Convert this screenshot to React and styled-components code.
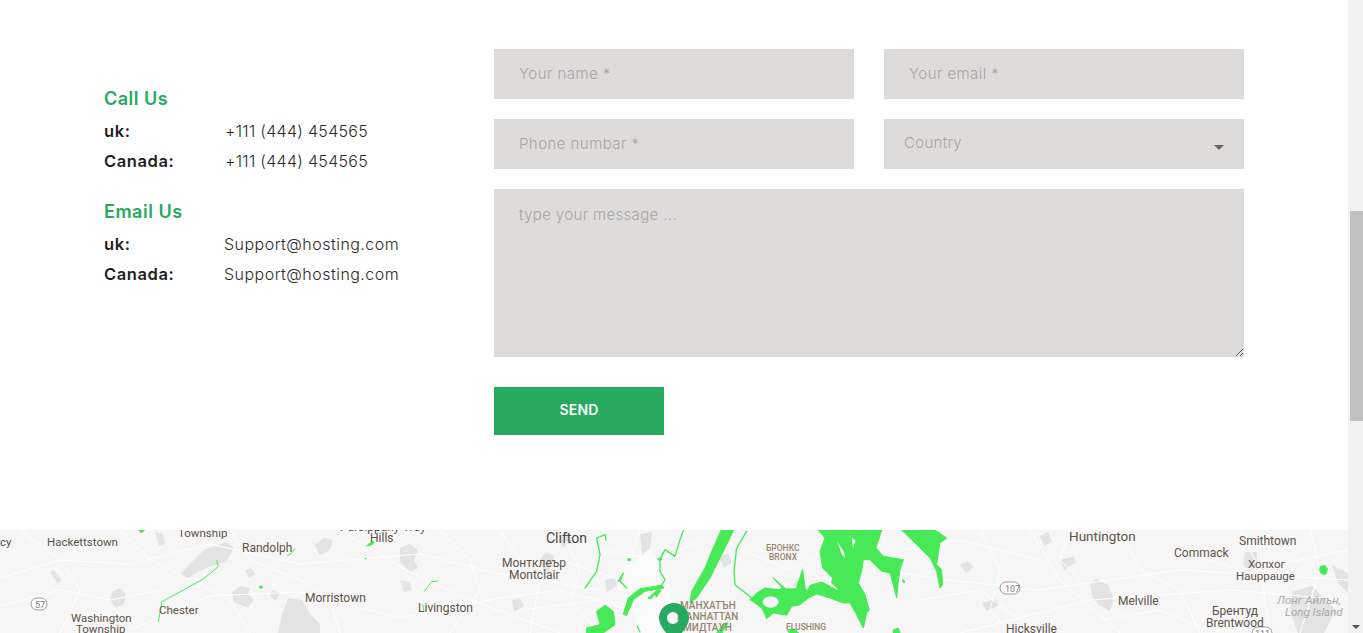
import React from 'react';
import styled, { createGlobalStyle } from 'styled-components';

const GlobalStyle = createGlobalStyle`
    html, body {
        margin: 0;
        padding: 0;
        height: 100%;
        overflow: hidden;
        background: #fff;
    }
    body {
        font-family: "Inter", "Liberation Sans", sans-serif;
    }
`

const Page = styled.div`
    width: 1348px;
`
const ContactSection = styled.section`
    display: flex;
    height: 530px;
    box-sizing: border-box;
    padding: 49px 104px 0;
`
const InfoColumn = styled.div`
    width: 390px;
    padding-top: 38px;
    box-sizing: border-box;
`
const InfoGroup = styled.div`
    margin-bottom: 24px;
`
const InfoTitle = styled.h4`
    margin: 0 0 5px;
    height: 24px;
    line-height: 24px;
    font-size: 18px;
    font-weight: 600;
    letter-spacing: 0.5px;
    color: #27a95f;
`
const InfoRow = styled.div`
    display: flex;
    height: 30px;
    line-height: 30px;
    font-size: 16px;
`
const InfoLabel = styled.span`
    width: ${props => props.$width}px;
    font-size: 16.5px;
    font-weight: 600;
    letter-spacing: 0.6px;
    color: #1f1f1f;
`
const InfoValue = styled.span`
    font-weight: 300;
    color: #2b2b2b;
    letter-spacing: ${props => props.$spacing}px;
`
const ContactForm = styled.form`
    display: grid;
    grid-template-columns: 360px 360px;
    grid-auto-rows: min-content;
    column-gap: 30px;
    row-gap: 20px;
    width: 750px;
`
const Input = styled.input`
    height: 50px;
    box-sizing: border-box;
    border: 0;
    border-radius: 0;
    outline: 0;
    padding: 0 25px 2px;
    background: #dedcdb;
    font-family: inherit;
    font-size: 15px;
    font-weight: 300;
    letter-spacing: 0.45px;
    color: #333;
    &::placeholder {
        color: #a6a4a3;
        opacity: 1;
    }
`
const SelectBox = styled.div`
    position: relative;
    height: 50px;
    box-sizing: border-box;
    padding: 0 20px;
    line-height: 48px;
    background: #dedcdb;
    font-size: 15px;
    font-weight: 300;
    letter-spacing: 0.3px;
    color: #a6a4a3;
`
const SelectCaret = styled.span`
    position: absolute;
    right: 20px;
    top: 26px;
    border-top: 5px solid #666;
    border-left: 5px solid transparent;
    border-right: 5px solid transparent;
`
const MessageArea = styled.textarea`
    grid-column: 1 / 3;
    display: block;
    width: 750px;
    height: 168px;
    box-sizing: border-box;
    border: 0;
    border-radius: 0;
    outline: 0;
    padding: 16px 25px;
    background: #dedcdb;
    font-family: inherit;
    font-size: 15px;
    font-weight: 300;
    letter-spacing: 0.35px;
    &::placeholder {
        color: #a6a4a3;
        opacity: 1;
    }
`
const SendButton = styled.button`
    grid-column: 1 / 3;
    width: 170px;
    height: 48px;
    margin-top: 10px;
    padding: 0 0 3px;
    border: 0;
    border-radius: 0;
    background: #27a95f;
    color: #fff;
    font-family: inherit;
    font-size: 14px;
    font-weight: 600;
    letter-spacing: 0.2px;
`
const MapFrame = styled.div`
    height: 103px;
    overflow: hidden;
    background: #f6f6f6;
`
const MapSvg = styled.svg`
    display: block;
    font-family: "Roboto", "Liberation Sans", sans-serif;
`
const ScrollTrack = styled.div`
    position: fixed;
    top: 0;
    right: 0;
    bottom: 0;
    width: 15px;
    background: #f1f1f1;
`
const ScrollThumb = styled.div`
    position: absolute;
    top: 211px;
    left: 2px;
    right: 0;
    height: 210px;
    background: #c1c1c1;
`
const ScrollArrow = styled.span`
    position: absolute;
    bottom: 4px;
    left: 4px;
    border-top: 4px solid #505050;
    border-left: 4px solid transparent;
    border-right: 4px solid transparent;
`

const phones = [['uk:', '+111 (444) 454565'], ['Canada:', '+111 (444) 454565']];
const emails = [['uk:', 'Support@hosting.com'], ['Canada:', 'Support@hosting.com']];

// [x, baseline y, text, size, colour, weight]
const placeColour = '#5d5348';
const areaColour = '#97866f';
const mapLabels = [
    [340, 1, 'Parsippany-Troy', 12, placeColour],
    [47, 16, 'Hackettstown', 11.5, placeColour],
    [178, 7, 'Township', 11.5, placeColour],
    [242, 22, 'Randolph', 12, placeColour],
    [370, 12, 'Hills', 12, placeColour],
    [305, 72, 'Morristown', 12, placeColour],
    [418, 82, 'Livingston', 12, placeColour],
    [159, 84, 'Chester', 11.5, placeColour],
    [71, 92, 'Washington', 11.5, placeColour],
    [76, 103, 'Township', 11.5, placeColour],
    [546, 13, 'Clifton', 14, '#444'],
    [502, 37, 'Монтклеър', 12, placeColour],
    [509, 49, 'Montclair', 12, placeColour],
    [766, 21, 'БРОНКС', 8.5, areaColour, 500],
    [769, 30, 'BRONX', 8.5, areaColour, 500],
    [680, 79, 'МАНХАТЪН', 10, areaColour, 500],
    [677, 90, 'MANHATTAN', 10, areaColour, 500],
    [683, 101, 'МИДТАУН', 10, areaColour, 500],
    [786, 100, 'FLUSHING', 8.5, areaColour, 500],
    [1069, 11, 'Huntington', 13.5, placeColour],
    [1174, 27, 'Commack', 12, placeColour],
    [1239, 15, 'Smithtown', 12, placeColour],
    [1248, 38, 'Хопхог', 11.5, placeColour],
    [1236, 50, 'Hauppauge', 11.5, placeColour],
    [1118, 75, 'Melville', 12, placeColour],
    [1212, 85, 'Брентуд', 12, placeColour],
    [1206, 97, 'Brentwood', 12, placeColour],
    [1006, 103, 'Hicksville', 12, placeColour],
    [0, 16, 'cy', 11.5, placeColour],
];

const grayBlobs = [
    'M180 44l24-24 22-8 8 6-8 14-12 3-12 5-14 8z',
    'M288 68l14 2 8 14 10 10 0 9h-42l4-18z',
    'M232 62l8-6 10 2-2 6 6 6-6 8-14-6z',
    'M112 62l8-4 6 6-2 10-8 4-6-8z',
    'M400 18l10-4 8 6-4 10 4 8-8 4-10-10z',
    'M155 2l8 2 2 10-6 2z',
    'M245 40l6-2 4 6-6 4z',
    'M272 60l8 3-4 8-6-5z',
    'M315 15l10-8 8 4-4 10-10 4z',
    'M400 50l10 2 2 8-8 2z',
    'M50 42l4-2 8 10-4 4z',
    'M1090 55l6-6 12 6 6 14-4 12-12-6-6-10z',
    'M1060 30l14-4 2 6-12 8z',
    'M1040 6l8-4 4 10-8 4z',
    'M960 35l8-4 6 6-8 6z',
    'M982 73l14-4 4 6-14 6z',
    'M1245 22l12 0 0 14-8 6-6-8z',
    'M1292 62l20-6 24 24-12 23h-26l-8-22z',
    'M1332 35l16 8v20l-10-10z',
    'M540 30l6-8 8 4-4 14-6 2z',
    'M718 26l10-2 4 8-8 6z',
    'M605 50l10-2 2 8-10 6z',
    'M512 70l8-2 4 8-10 6z',
    'M640 4l12-2-2 16-8 6z',
    'M560 5l8-3 4 10-10 6z',
    'M795 50l6 2-2 6-6-2z',
    'M840 48l6 0 2 6-6 0z',
];

const roads = [
    'M0 48L60 30 130 34 210 14 300 34 420 24 500 44 600 60',
    'M130 100L210 66 300 62 400 88 500 68 560 60 660 88',
    'M340 0L410 42 470 70 560 103',
    'M120 0L150 30 190 50 230 70 250 103',
    'M230 0L250 30 300 50 330 70 340 103',
    'M440 0L470 30 480 60 450 103',
    'M500 0L520 30 540 50 530 103',
    'M560 0L580 40 570 70 600 103',
    'M0 76L60 60 110 70 160 60',
    'M20 0L60 30 80 60 60 103',
    'M640 0L620 60 660 103',
    'M600 20L660 30 700 10',
    'M560 30L620 50',
    'M520 80L600 70 640 76',
    'M740 20L790 40 830 20',
    'M760 60L800 50 830 70 860 60',
    'M780 70L790 103',
    'M880 40L950 50 1040 60 1180 40 1348 50',
    'M960 103L1090 70 1230 60 1348 70',
    'M1030 0L1060 50 1120 103',
    'M1120 0L1140 40 1180 60 1200 103',
    'M980 0L1000 40 990 80 1010 103',
    'M920 70L980 60 1020 90',
    'M900 20L960 10 1040 30',
    'M1180 20L1240 40 1300 30 1348 20',
    'M1240 0L1260 40 1270 103',
    'M1070 0L1060 30 1080 50',
    'M1100 90L1160 80 1210 100',
    'M1310 0L1320 40 1300 103',
];

const Map = () => (
    <MapSvg width="1348" height="103" viewBox="0 0 1348 103">
        <rect width="1348" height="103" fill="#f6f6f6" />
        <path d="M622 40l28-20 20 40 6 43h-36z" fill="#fbfbfb" />
        {grayBlobs.map((d) => (
            <path key={d} d={d} fill="#e3e3e3" />
        ))}
        <g fill="none" stroke="#fff" strokeWidth="1">
            {roads.map((d) => (
                <path key={d} d={d} />
            ))}
        </g>
        {/* traced over the 3x crops, so the coordinates are crop pixels */}
        <g transform="translate(580 -2) scale(0.3333)" strokeLinejoin="round" strokeLinecap="round">
            <g fill="#47ea56" stroke="#47ea56" strokeWidth="3">
                <path d="M425 5H462L440 50 410 110 390 150 350 210 330 225 335 190 375 120 395 70z" />
                <path d="M130 258L145 210 180 182 245 172 252 180 195 190 160 215 140 262z" />
                <path d="M50 250L75 232 100 250 105 290 70 315H20V300L60 290z" />
                <path d="M234 92l6-3 5 4-5 6z" />
                <path d="M145 92l6 0 0 6-6 0z" />
                <path d="M205 210l30-26 8 2-14 22-4-10-12 14z" />
                <path d="M410 315l24-30 10 0-18 30z" />
            </g>
            <g fill="none" stroke="#47ea56" strokeWidth="4">
                <path d="M500 10L470 60 462 130 465 170 490 190 515 210" />
                <path d="M245 172L255 155 240 130 240 95 255 65 285 85 300 35 310 8" />
                <path d="M15 180L50 130 60 80 50 30 75 20 78 36" />
                <path d="M115 160L130 135 120 160 140 180" />
                <path d="M172 295L180 312" />
            </g>
        </g>
        <g transform="translate(750 -2) scale(0.3333)" strokeLinejoin="round">
            <g fill="#47ea56" stroke="#47ea56" strokeWidth="3">
                <path d="M205 6L225 30 210 70 218 120 248 150 245 165 265 183 262 187 215 162 180 172 172 190 165 178 158 125 138 182 108 183 68 148 95 178 90 185 45 180 20 195 0 215 15 225 35 240 45 260 50 272 70 255 110 262 125 235 150 230 175 210 200 198 240 210 280 225 300 225 320 260 340 300 350 255 358 245 345 200 325 165 335 130 340 95 360 95 395 130 420 135 430 170 440 210 445 160 450 125 460 95 400 85 378 60 395 6z" />
                <path d="M455 6H555L590 30 570 45 565 75 560 110 575 125 578 170 570 180 560 130 540 90 500 50z" />
                <path d="M112 305l22-2 12 12h-28z" />
                <path d="M430 305l16-4 4 14h-20z" />
                <path d="M458 155l6 4-2 6-4-4z" />
            </g>
            <g fill="#f6f6f6">
                <ellipse cx="62" cy="222" rx="24" ry="17" />
                <path d="M262 40l20 32 4 20-12-16z" />
                <path d="M305 28l12 10-8 22z" />
            </g>
        </g>
        <g transform="translate(0 -5) scale(0.3333)">
            <g fill="#47ea56">
                <path d="M414 15h22l-12 10z" />
                <path d="M1095 66l20-18 10 2-8 10z" />
                <path d="M776 185l8-4 6 8-10 2z" />
                <path d="M1092 100l6-2 4 6z" />
            </g>
            <g fill="none" stroke="#47ea56" strokeWidth="3">
                <path d="M475 290L486 230 605 165 625 150 655 125 650 105" />
                <path d="M862 92L875 85 885 70" />
                <path d="M1272 200L1295 170 1315 168" />
                <path d="M1268 238L1272 258" />
            </g>
        </g>
        <path d="M1320 36l5-1 3 4-2 6-5-1-2-4z" fill="#47ea56" />
        <g fill="#fff" stroke="#9b9b9b" strokeWidth="1">
            <rect x="31" y="68" width="16" height="12" rx="6" />
            <rect x="1000" y="52" width="20" height="12" rx="6" />
            <rect x="1252" y="97" width="20" height="12" rx="6" />
        </g>
        <g fontSize="9" fill="#777">
            <text x="35" y="77.5">57</text>
            <text x="1005" y="61.5">107</text>
            <text x="1255" y="106.5">111</text>
        </g>
        {mapLabels.map(([x, y, label, size, colour, weight]) => (
            <text key={label + x} x={x} y={y} fontSize={size} fontWeight={weight} fill={colour}>{label}</text>
        ))}
        <text x="1277" y="74" fontSize="11.5" fontStyle="italic" fill="#aaa">Лонг Айлън,</text>
        <text x="1285" y="86" fontSize="11.5" fontStyle="italic" fill="#aaa">Long Island</text>
        <path
            d="M674 73c8.300 0 15 6.700 15 15 0 8-9 17-15 25-6-8-15-17-15-25 0-8.300 6.700-15 15-15zM673 82a6 6 0 1 0 0 12 6 6 0 0 0 0-12z"
            fill="#27a95f"
            fillRule="evenodd"
        />
    </MapSvg>
);

const App = () => (
    <Page>
        <GlobalStyle />
        <ContactSection>
            <InfoColumn>
                <InfoGroup>
                    <InfoTitle>Call Us</InfoTitle>
                    {phones.map(([label, value]) => (
                        <InfoRow key={label}>
                            <InfoLabel $width={121}>{label}</InfoLabel>
                            <InfoValue $spacing={0.3}>{value}</InfoValue>
                        </InfoRow>
                    ))}
                </InfoGroup>
                <InfoGroup>
                    <InfoTitle>Email Us</InfoTitle>
                    {emails.map(([label, value]) => (
                        <InfoRow key={label}>
                            <InfoLabel $width={120}>{label}</InfoLabel>
                            <InfoValue $spacing={0.47}>{value}</InfoValue>
                        </InfoRow>
                    ))}
                </InfoGroup>
            </InfoColumn>
            <ContactForm>
                <Input placeholder="Your name *" />
                <Input placeholder="Your email *" />
                <Input placeholder="Phone numbar *" />
                <SelectBox>Country<SelectCaret /></SelectBox>
                <MessageArea placeholder="type your message ..." />
                <SendButton type="button">SEND</SendButton>
            </ContactForm>
        </ContactSection>
        <MapFrame>
            <Map />
        </MapFrame>
        <ScrollTrack>
            <ScrollThumb />
            <ScrollArrow />
        </ScrollTrack>
    </Page>
);

export default App;
